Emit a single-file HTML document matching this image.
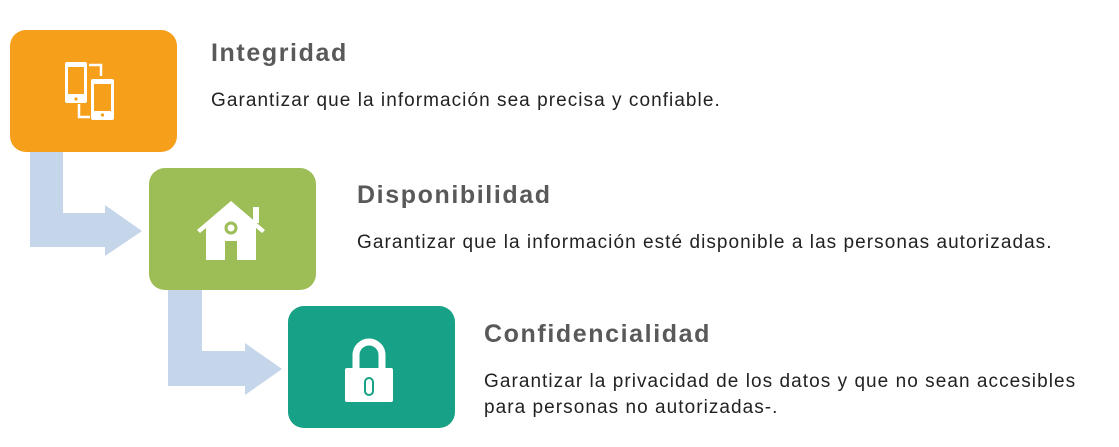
<!DOCTYPE html>
<html><head><meta charset="utf-8"><style>
body{margin:0;width:1119px;height:447px;background:#fff;position:relative;overflow:hidden;font-family:"Liberation Sans",sans-serif}
.box{position:absolute;width:167px;height:122px;border-radius:16px}
.t{position:absolute;font-weight:bold;font-size:25px;color:#595959;letter-spacing:1.6px;white-space:nowrap}
.d{position:absolute;font-size:19px;color:#222;white-space:nowrap;line-height:26px;letter-spacing:1.05px}
svg{position:absolute;left:0;top:0}
</style></head><body>
<svg width="1119" height="447">
<polygon points="30,152 63,152 63,213 105,213 105,205 142,231 105,256 105,247 30,247" fill="#c5d5ea"/>
<polygon points="168,290 202,290 202,351 245,351 245,343 282,369 245,395 245,386 168,386" fill="#c5d5ea"/>
</svg>
<div class="box" style="left:10px;top:30px;background:#f59f1a"></div>
<div class="box" style="left:149px;top:168px;background:#9dbd57"></div>
<div class="box" style="left:288px;top:306px;background:#17a186"></div>
<svg width="1119" height="447">
<g fill="#fff">
<rect x="65" y="62" width="22" height="41" rx="2"/>
<rect x="91" y="79" width="23" height="41" rx="2"/>
</g>
<g fill="#f59f1a">
<rect x="68" y="67" width="16" height="27"/>
<rect x="94" y="84" width="17" height="27"/>
<circle cx="76" cy="99" r="1.6"/><circle cx="102.5" cy="115" r="1.6"/>
</g>
<path d="M89 65 H101 V76 M79 104 V117 H90" stroke="#fff" stroke-width="2.5" fill="none"/>
<g fill="#fff">
<polygon points="197,230 231,201 265,230 262,233 231,207 200,233"/>
<polygon points="206,226 231,206 256,226 256,260 206,260"/>
<rect x="253" y="207" width="6" height="16"/>
</g>
<circle cx="231" cy="228" r="5" fill="none" stroke="#9dbd57" stroke-width="3"/>
<rect x="225" y="241" width="12" height="19" fill="#9dbd57"/>
<path d="M356 370 V355 a13 13 0 0 1 26 0 V370" stroke="#fff" stroke-width="7" fill="none"/>
<rect x="345" y="368" width="48" height="34" rx="2" fill="#fff"/>
<rect x="365" y="378" width="8" height="17" rx="4" fill="none" stroke="#17a186" stroke-width="2"/>
</svg>
<div class="t" style="left:211px;top:39px">Integridad</div>
<div class="d" style="left:211px;top:88px">Garantizar que la información sea precisa y confiable.</div>
<div class="t" style="left:357px;top:181px">Disponibilidad</div>
<div class="d" style="left:357px;top:230px">Garantizar que la información esté disponible a las personas autorizadas.</div>
<div class="t" style="left:484px;top:320px">Confidencialidad</div>
<div class="d" style="left:484px;top:369px">Garantizar la privacidad de los datos y que no sean accesibles<br>para personas no autorizadas-.</div>
</body></html>
